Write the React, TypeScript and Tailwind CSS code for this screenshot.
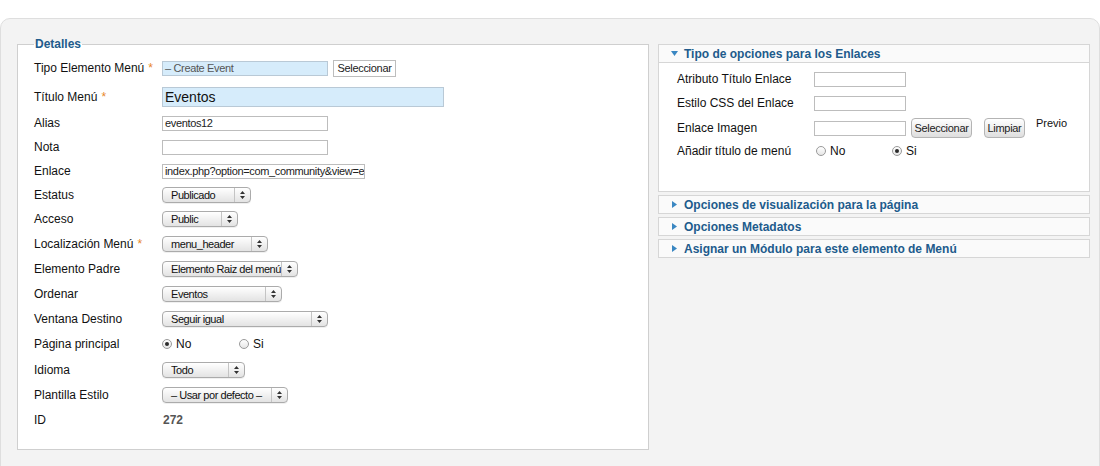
import React from 'react';

const blue = 'text-[#215b8c]';

function Req() {
  return <span className="ml-1 text-[#e8862a]">*</span>;
}

function TextBox({ w, value, hi, big }: { w: number; value?: string; hi?: boolean; big?: boolean }) {
  return (
    <div
      className={`flex items-center overflow-hidden whitespace-nowrap border pl-[2px] ${
        hi ? 'border-[#b9c9d6] bg-[#d6ecfb]' : 'border-[#bdbdbd] bg-white'
      } ${big ? 'h-[20px] text-[14px] text-[#111]' : 'h-[15px] text-[11px] tracking-[-0.35px] text-[#222]'}`}
      style={{ width: w }}
    >
      <span className={hi && !big ? 'text-[#555]' : ''}>{value}</span>
    </div>
  );
}

function Select({ w, value }: { w: number; value: string }) {
  return (
    <div
      className="flex h-[16px] items-stretch overflow-hidden rounded-[4px] border border-[#ababab] bg-gradient-to-b from-white to-[#e3e3e3] shadow-[0_1px_0_rgba(0,0,0,0.06)]"
      style={{ width: w }}
    >
      <span className="flex-1 whitespace-nowrap pl-[8px] text-[11px] leading-[14px] tracking-[-0.45px] text-[#111]">{value}</span>
      <span className="flex w-[16px] shrink-0 items-center justify-center border-l border-[#c4c4c4]">
        <svg width="5" height="8" viewBox="0 0 5 8">
          <path d="M2.5 0L5 3H0z M2.5 8L0 5h5z" fill="#333" />
        </svg>
      </span>
    </div>
  );
}

function Radio({ checked, label }: { checked?: boolean; label: string }) {
  return (
    <div className="flex w-[77px] items-center gap-[4px]">
      <span className="flex h-[10px] w-[10px] items-center justify-center rounded-full border border-[#9a9a9a] bg-gradient-to-b from-white to-[#e6e6e6]">
        {checked && <span className="h-[4px] w-[4px] rounded-full bg-[#2b2b2b]" />}
      </span>
      <span className="text-[12px] text-[#111]">{label}</span>
    </div>
  );
}

function Row({ h, label, req, children }: { h: number; label: string; req?: boolean; children?: React.ReactNode }) {
  return (
    <div className="grid grid-cols-[128px_1fr] items-center" style={{ height: h }}>
      <div className="text-[12px] text-[#111]">
        {label}
        {req && <Req />}
      </div>
      <div className="flex items-center">{children}</div>
    </div>
  );
}

function MacButton({ w, children }: { w: number; children: React.ReactNode }) {
  return (
    <div
      className="flex h-[20px] items-center justify-center rounded-[4px] border border-[#b4b4b4] bg-gradient-to-b from-white to-[#dedede] text-[11px] tracking-[-0.3px] text-[#222]"
      style={{ width: w }}
    >
      {children}
    </div>
  );
}

function Collapsed({ title }: { title: string }) {
  return (
    <div className="flex h-[19px] items-center border border-[#d6d6d6] bg-[#fafafa] pl-[13px]">
      <svg width="5" height="7" viewBox="0 0 5 7" className="mr-[7px]">
        <path d="M0 0L5 3.5L0 7z" fill="#3a87c2" />
      </svg>
      <span className={`text-[12px] font-bold ${blue}`}>{title}</span>
    </div>
  );
}

export default function App() {
  return (
    <div className="h-[466px] overflow-hidden bg-white pt-[18px]" style={{ fontFamily: '"Liberation Sans", Arial, sans-serif' }}>
      <div className="flex h-[470px] gap-[9px] rounded-[10px] border border-[#dedede] bg-[#f3f3f3] pl-[16px] pr-[9px] pt-[18px]">
        {/* left */}
        <fieldset className="h-[413px] w-[632px] border border-[#cfcfcf] bg-white pl-[16px]">
          <legend className={`px-[1px] text-[12px] font-bold leading-[14px] ${blue}`}>Detalles</legend>
          <div className="pt-[2px]">
            <Row h={30} label="Tipo Elemento Menú" req>
              <TextBox w={166} value="– Create Event" hi />
              <div className="ml-[5px] flex h-[17px] w-[63px] items-center justify-center border border-[#bdbdbd] bg-white text-[11px] tracking-[-0.3px] text-[#222]">
                Seleccionar
              </div>
            </Row>
            <Row h={28} label="Título Menú" req>
              <TextBox w={282} value="Eventos" hi big />
            </Row>
            <Row h={24} label="Alias">
              <TextBox w={166} value="eventos12" />
            </Row>
            <Row h={24} label="Nota">
              <TextBox w={166} />
            </Row>
            <Row h={24} label="Enlace">
              <TextBox w={203} value="index.php?option=com_community&view=ev" />
            </Row>
            <Row h={24} label="Estatus">
              <Select w={89} value="Publicado" />
            </Row>
            <Row h={24} label="Acceso">
              <Select w={76} value="Public" />
            </Row>
            <Row h={26} label="Localización Menú" req>
              <Select w={106} value="menu_header" />
            </Row>
            <Row h={24} label="Elemento Padre">
              <Select w={136} value="Elemento Raiz del menú" />
            </Row>
            <Row h={26} label="Ordenar">
              <Select w={120} value="Eventos" />
            </Row>
            <Row h={24} label="Ventana Destino">
              <Select w={166} value="Seguir igual" />
            </Row>
            <Row h={26} label="Página principal">
              <Radio checked label="No" />
              <Radio label="Si" />
            </Row>
            <Row h={26} label="Idioma">
              <Select w={83} value="Todo" />
            </Row>
            <Row h={24} label="Plantilla Estilo">
              <Select w={126} value="– Usar por defecto –" />
            </Row>
            <Row h={26} label="ID">
              <span className="pl-[1px] text-[12px] font-bold text-[#555]">272</span>
            </Row>
          </div>
        </fieldset>

        {/* right */}
        <div className="flex w-[432px] flex-col gap-[3px] pt-[7px]">
          <div className="border border-[#d6d6d6] bg-white">
            <div className="flex h-[18px] items-center border-b border-[#d6d6d6] bg-[#fafafa] pl-[12px]">
              <svg width="7" height="5" viewBox="0 0 7 5" className="mr-[6px]">
                <path d="M0 0H7L3.5 5z" fill="#3a87c2" />
              </svg>
              <span className={`text-[12px] font-bold ${blue}`}>Tipo de opciones para los Enlaces</span>
            </div>
            <div className="h-[128px] pl-[18px] pt-[4px]">
              <div className="grid h-[24px] grid-cols-[137px_1fr] items-center">
                <span className="text-[12px] text-[#111]">Atributo Título Enlace</span>
                <TextBox w={92} />
              </div>
              <div className="grid h-[24px] grid-cols-[137px_1fr] items-center">
                <span className="text-[12px] text-[#111]">Estilo CSS del Enlace</span>
                <TextBox w={92} />
              </div>
              <div className="grid h-[24px] grid-cols-[137px_1fr] items-center">
                <span className="text-[12px] text-[#111]">Enlace Imagen</span>
                <div className="flex items-center">
                  <TextBox w={92} />
                  <div className="ml-[5px]">
                    <MacButton w={61}>Seleccionar</MacButton>
                  </div>
                  <div className="ml-[12px]">
                    <MacButton w={41}>Limpiar</MacButton>
                  </div>
                  <span className="mb-[10px] ml-[11px] text-[11px] text-[#111]">Previo</span>
                </div>
              </div>
              <div className="grid h-[24px] grid-cols-[137px_1fr] items-center">
                <span className="text-[12px] text-[#111]">Añadir título de menú</span>
                <div className="flex items-center pl-[2px]">
                  <div className="w-[76px]">
                    <Radio label="No" />
                  </div>
                  <Radio checked label="Si" />
                </div>
              </div>
            </div>
          </div>
          <Collapsed title="Opciones de visualización para la página" />
          <Collapsed title="Opciones Metadatos" />
          <Collapsed title="Asignar un Módulo para este elemento de Menú" />
        </div>
      </div>
    </div>
  );
}
